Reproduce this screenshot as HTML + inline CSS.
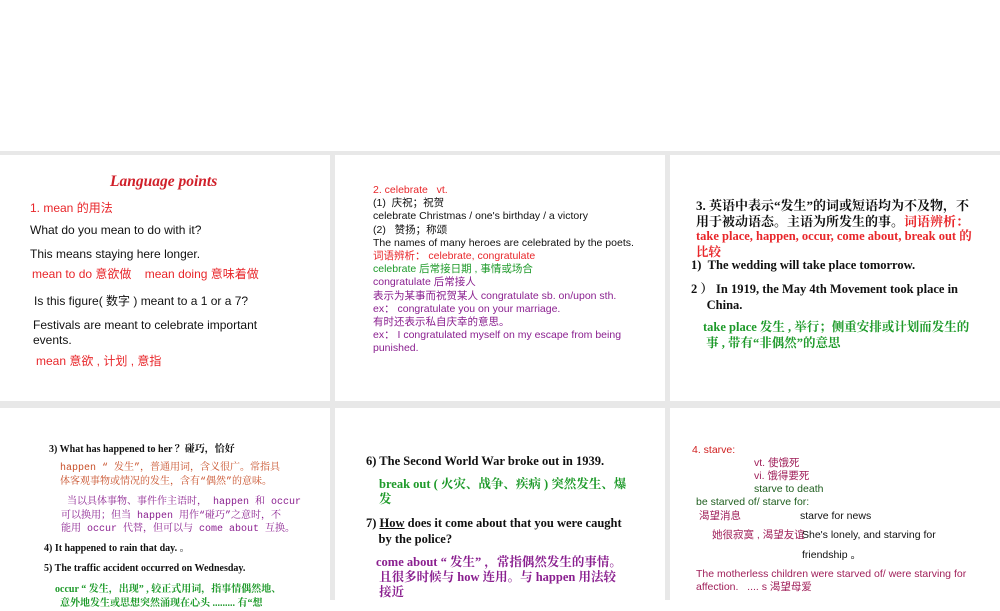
<!DOCTYPE html>
<html><head><meta charset="utf-8"><style>
body{margin:0;width:1000px;height:600px;background:#fff;position:relative;overflow:hidden;font-family:"Liberation Sans","Noto Sans CJK SC",sans-serif;}
.g{position:absolute;left:0;top:151px;width:1000px;height:449px;background:#e8e8e8;}
.p{position:absolute;background:#fff;}
.t{position:absolute;white-space:nowrap;line-height:14px;}
.s{font-family:"Liberation Serif","Noto Serif CJK SC",serif;font-weight:bold;}
.r{color:#e8262a}.k{color:#111}.gr{color:#1e9a2a}.pu{color:#8a1f8f}.m{color:#a0205a}.dg{color:#1f5e1f}.o{color:#c8502a}
</style></head><body>
<div class="g"></div>
<div class="p" style="left:0;top:155px;width:330px;height:246px"></div>
<div class="p" style="left:335px;top:155px;width:330px;height:246px"></div>
<div class="p" style="left:670px;top:155px;width:330px;height:246px"></div>
<div class="p" style="left:0;top:408px;width:330px;height:192px"></div>
<div class="p" style="left:335px;top:408px;width:330px;height:192px"></div>
<div class="p" style="left:670px;top:408px;width:330px;height:192px"></div>

<!-- panel 1 -->
<div class="t r" style="left:110px;top:173px;font:italic bold 15.5px 'Liberation Serif',serif;color:#d0202a">Language points</div>
<div class="t r" style="left:30px;top:201px;font-size:12px">1. mean 的用法</div>
<div class="t k" style="left:30px;top:223px;font-size:12px">What do you mean to do with it?</div>
<div class="t k" style="left:30px;top:247px;font-size:12px">This means staying here longer.</div>
<div class="t r" style="left:32px;top:267px;font-size:12px">mean to do 意欲做 &nbsp;&nbsp;&nbsp;mean doing 意味着做</div>
<div class="t k" style="left:34px;top:294px;font-size:12px">Is this figure( 数字 ) meant to a 1 or a 7?</div>
<div class="t k" style="left:33px;top:318px;font-size:12px;line-height:15px">Festivals are meant to celebrate important<br>events.</div>
<div class="t r" style="left:36px;top:354px;font-size:12px">mean 意欲 , 计划 , 意指</div>

<!-- panel 2 -->
<div style="position:absolute;left:373px;top:184px;font-size:10.5px;line-height:13.2px;white-space:nowrap">
<div class="r">2. celebrate &nbsp;&nbsp;vt.</div>
<div class="k">(1) &nbsp;庆祝；祝贺</div>
<div class="k">celebrate Christmas / one's birthday / a victory</div>
<div class="k">(2) &nbsp;&nbsp;赞扬；称颂</div>
<div class="k">The names of many heroes are celebrated by the poets.</div>
<div class="r">词语辨析： celebrate, congratulate</div>
<div class="gr">celebrate 后常接日期 , 事情或场合</div>
<div class="pu">congratulate 后常接人</div>
<div class="pu">表示为某事而祝贺某人 congratulate sb. on/upon sth.</div>
<div class="pu">ex： congratulate you on your marriage.</div>
<div class="pu">有时还表示私自庆幸的意思。</div>
<div class="pu">ex： I congratulated myself on my escape from being</div>
<div class="pu">punished.</div>
</div>

<!-- panel 3 -->
<div class="t s k" style="left:696px;top:198px;font-size:13px;line-height:15.5px">3. 英语中表示“发生”的词或短语均为不及物，不<br>用于被动语态。主语为所发生的事。<span class="r">词语辨析：</span></div>
<div class="t s r" style="left:696px;top:229px;font-size:12.5px;line-height:15.5px">take place, happen, occur, come about, break out 的<br>比较</div>
<div class="t s k" style="left:691px;top:258px;font-size:12.5px">1) &nbsp;The wedding will take place tomorrow.</div>
<div class="t s k" style="left:691px;top:282px;font-size:12.5px;line-height:15.5px">2 ） In 1919, the May 4th Movement took place in<br>&nbsp;&nbsp;&nbsp;&nbsp;&nbsp;China.</div>
<div class="t s gr" style="left:703px;top:320px;font-size:12.5px;line-height:15.5px">take place 发生 , 举行；侧重安排或计划而发生的<br>&nbsp;事 , 带有“非偶然”的意思</div>

<!-- panel 4 -->
<div class="t s k" style="left:49px;top:443px;font-size:10px">3) What has happened to her ？碰巧，恰好</div>
<div class="t o" style="left:60px;top:462px;font-size:10px;line-height:14px;font-family:'Liberation Mono','Noto Serif CJK SC',monospace">happen “ 发生”，普通用词，含义很广。常指具<br>体客观事物或情况的发生，含有“偶然”的意味。</div>
<div class="t pu" style="left:61px;top:496px;font-size:10px;line-height:13.5px;font-family:'Liberation Mono','Noto Serif CJK SC',monospace">&nbsp;当以具体事物、事件作主语时， happen 和 occur<br>可以换用；但当 happen 用作“碰巧”之意时，不<br>能用 occur 代替，但可以与 come about 互换。</div>
<div class="t s k" style="left:44px;top:542px;font-size:10px">4) It happened to rain that day. 。</div>
<div class="t s k" style="left:44px;top:562px;font-size:10px">5) The traffic accident occurred on Wednesday.</div>
<div class="t s gr" style="left:55px;top:583px;font-size:10px;line-height:14px">occur “ 发生，出现” , 较正式用词，指事情偶然地、<br>&nbsp;&nbsp;意外地发生或思想突然涌现在心头 ......... 有“想</div>

<!-- panel 5 -->
<div class="t s k" style="left:366px;top:454px;font-size:12.5px">6) The Second World War broke out in 1939.</div>
<div class="t s gr" style="left:379px;top:477px;font-size:12.5px;line-height:15px">break out ( 火灾、战争、疾病 ) 突然发生、爆<br>发</div>
<div class="t s k" style="left:366px;top:516px;font-size:12.5px;line-height:15.5px">7) <u>How</u> does it come about that you were caught<br>&nbsp;&nbsp;&nbsp;&nbsp;by the police?</div>
<div class="t s pu" style="left:376px;top:555px;font-size:12.5px;line-height:15px">come about “ 发生” ，常指偶然发生的事情。<br>&nbsp;且很多时候与 how 连用。与 happen 用法较<br>&nbsp;接近</div>

<!-- panel 6 -->
<div style="position:absolute;left:0;top:0;font-size:10.5px">
<div class="t r" style="left:692px;top:443px;color:#d02020">4. starve:</div>
<div class="t m" style="left:754px;top:456px">vt. 使饿死</div>
<div class="t m" style="left:754px;top:469px">vi. 饿得要死</div>
<div class="t dg" style="left:754px;top:482px">starve to death</div>
<div class="t dg" style="left:696px;top:495px">be starved of/ starve for:</div>
<div class="t m" style="left:699px;top:509px">渴望消息</div>
<div class="t k" style="left:800px;top:509px">starve for news</div>
<div class="t m" style="left:712px;top:528px">她很寂寞 , 渴望友谊</div>
<div class="t k" style="left:802px;top:528px">She's lonely, and starving for</div>
<div class="t k" style="left:802px;top:548px">friendship 。</div>
<div class="t m" style="left:696px;top:567px">The motherless children were starved of/ were starving for</div>
<div class="t m" style="left:696px;top:580px">affection. &nbsp;&nbsp;.... s 渴望母爱</div>
</div>
</body></html>
